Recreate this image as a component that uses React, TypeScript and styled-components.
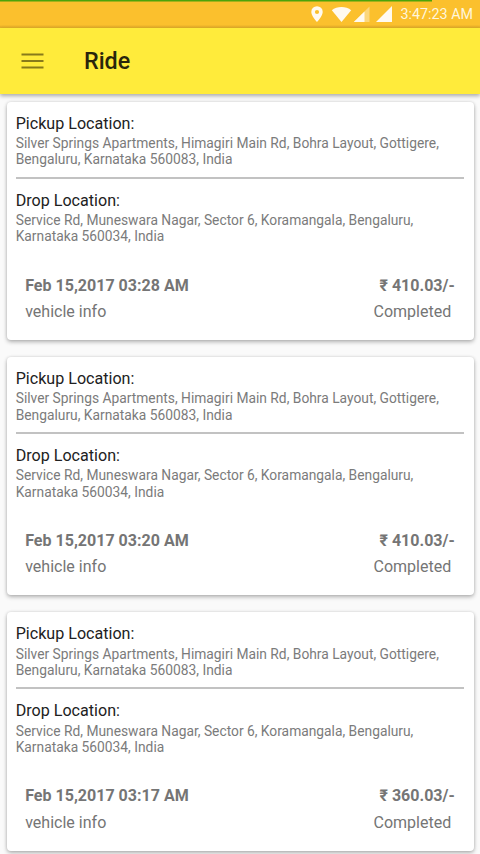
import React from "react";
import styled, { createGlobalStyle } from "styled-components";

const GlobalStyle = createGlobalStyle`
  * { box-sizing: border-box; }
  html, body { margin: 0; padding: 0; }
  body { background: #fafafa; font-family: Roboto, sans-serif; overflow: hidden; }
`;

const Screen = styled.div`
  width: 480px;
  height: 854px;
  overflow: hidden;
  display: flex;
  flex-direction: column;
  background: #fafafa;
`;

const Progress = styled.div`
  width: 432px;
  height: 2px;
  background: linear-gradient(#4ea30a 1px, #a4b11c 1px);
`;

const StatusBar = styled.header`
  height: 28px;
  flex: none;
  display: flex;
  flex-direction: column;
  background: linear-gradient(#fbc02d 0 25px, #eeb42b 26px, #dfae29 28px);
`;

const StatusItems = styled.div`
  flex: 1;
  display: flex;
  align-items: center;
  justify-content: flex-end;
  padding: 0 6.5px 2px 0;
  color: #fff6dc;
`;

const StatusIcons = styled.svg`
  display: block;
  width: 90px;
  height: 18px;
  fill: #fffaf0;
`;

const Clock = styled.time`
  font-size: 14.3px;
  line-height: 18px;
  width: 73px;
  margin-left: 1px;
  white-space: nowrap;
`;

const Toolbar = styled.div`
  position: relative;
  height: 65.5px;
  flex: none;
  display: flex;
  align-items: center;
  padding-left: 21px;
  background: #ffeb3b;
  box-shadow: 0 2px 4px rgba(0, 0, 0, 0.32);
`;

const MenuIcon = styled.svg`
  display: block;
  width: 23px;
  height: 18px;
  stroke: #887a1a;
  stroke-width: 2;
`;

const Title = styled.h1`
  margin: 1px 0 0 40px;
  font-size: 23.3px;
  line-height: 28px;
  font-weight: 500;
  color: #29250c;
`;

const RideList = styled.main`
  display: flex;
  flex-direction: column;
  gap: 17px;
  padding: 8.3px 6.5px 0;
`;

const Card = styled.article`
  height: 238.3px;
  flex: none;
  padding: 12px 9.2px 0;
  background: #fff;
  border-radius: 4px;
  box-shadow: 0 2px 4px rgba(0, 0, 0, 0.28), 0 0 3px rgba(0, 0, 0, 0.12);
`;

const Label = styled.h2`
  margin: 0;
  font-size: 16.1px;
  line-height: 20px;
  font-weight: 400;
  color: #212121;
`;

const Address = styled.p`
  margin: 1.2px 0 0;
  font-size: 13.8px;
  line-height: 16.4px;
  color: #7b7b7b;
  white-space: pre-line;
`;

const Divider = styled.hr`
  height: 2px;
  margin: 9px 0 12px;
  border: 0;
  background: #c2c2c2;
`;

const Summary = styled.div<{ $strong?: boolean }>`
  display: flex;
  justify-content: space-between;
  margin-top: ${(p) => (p.$strong ? "30.8px" : "6.6px")};
  padding: 0 ${(p) => (p.$strong ? "9.5px" : "13px")} 0 9.5px;
  font-size: 16.05px;
  line-height: 20px;
  font-weight: ${(p) => (p.$strong ? 700 : 400)};
  color: #757575;
`;

const rides = [
  { time: "Feb 15,2017 03:28 AM", fare: "₹ 410.03/-" },
  { time: "Feb 15,2017 03:20 AM", fare: "₹ 410.03/-" },
  { time: "Feb 15,2017 03:17 AM", fare: "₹ 360.03/-" },
];

const pickup =
  "Silver Springs Apartments, Himagiri Main Rd, Bohra Layout, Gottigere,\nBengaluru, Karnataka 560083, India";
const drop =
  "Service Rd, Muneswara Nagar, Sector 6, Koramangala, Bengaluru,\nKarnataka 560034, India";

function RideCard({ time, fare }: { time: string; fare: string }) {
  return (
    <Card>
      <Label>Pickup Location:</Label>
      <Address>{pickup}</Address>
      <Divider />
      <Label>Drop Location:</Label>
      <Address>{drop}</Address>
      <Summary $strong>
        <span>{time}</span>
        <span>{fare}</span>
      </Summary>
      <Summary>
        <span>vehicle info</span>
        <span>Completed</span>
      </Summary>
    </Card>
  );
}

export default function App() {
  return (
    <>
      <GlobalStyle />
      <Screen>
        <StatusBar>
          <Progress />
          <StatusItems>
            <StatusIcons viewBox="0 0 90 18" aria-hidden="true">
              <path
                fillRule="evenodd"
                d="M7 1.200a5.700 5.700 0 0 0-5.700 5.700C1.300 11 7 17 7 17s5.700-6 5.700-10.100A5.700 5.700 0 0 0 7 1.200zm0 3.700a2.100 2.100 0 1 1 0 4.200 2.100 2.100 0 0 1 0-4.200z"
              />
              <path d="M21.800 5.200C27 0.900 36 0.900 41.200 5.200L31.500 17z" />
              <path opacity="0.4" d="M43.800 17L59.500 1.500V17z" />
              <path d="M43.800 17L54.500 6.400V17z" />
              <path d="M66 17L82 1V17z" />
            </StatusIcons>
            <Clock>3:47:23 AM</Clock>
          </StatusItems>
        </StatusBar>
        <Toolbar>
          <MenuIcon viewBox="0 0 23 18" aria-hidden="true">
            <path d="M0.500 2.500H22.500M0.500 9H22.500M0.500 15.500H22.500" />
          </MenuIcon>
          <Title>Ride</Title>
        </Toolbar>
        <RideList>
          {rides.map((ride) => (
            <RideCard key={ride.time} {...ride} />
          ))}
        </RideList>
      </Screen>
    </>
  );
}
